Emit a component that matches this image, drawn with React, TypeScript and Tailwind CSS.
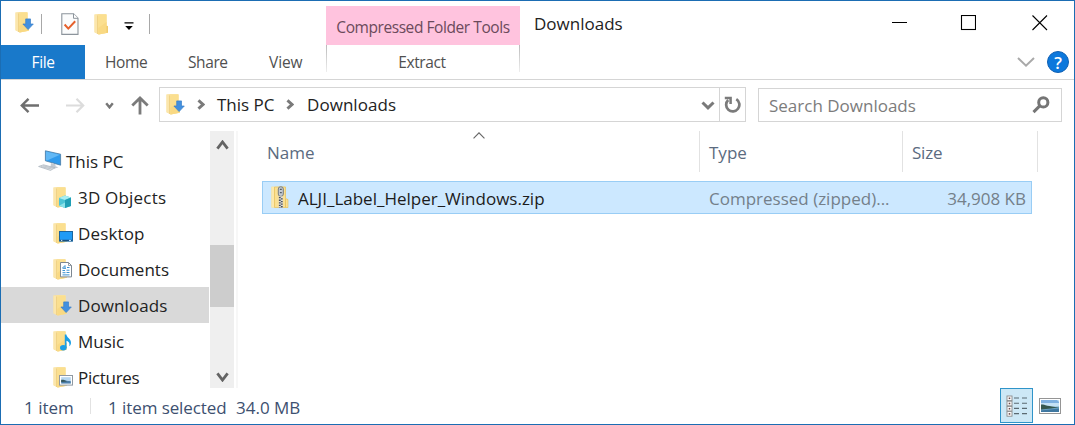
import React from 'react';

type Badge = 'none' | 'cube' | 'desktop' | 'doc' | 'down' | 'music' | 'picture';

function Folder({ badge = 'none', className = '' }: { badge?: Badge; className?: string }) {
  return (
    <svg width="21" height="23" viewBox="0 0 21 23" className={'shrink-0 ' + className}>
      <path d="M.5 1.4L4.5 1H12.6V12.6L14 13.2V19.6L5 21.6L.5 19.2Z" fill="#fae19a" />
      <path d="M.5 1.6L4 2.6V21L.5 19.2Z" fill="#fbe6ac" />
      <path d="M3.6 2.4V21" stroke="#efd083" strokeWidth="1" />
      <path d="M4.3 3.4L6 2H12.6V12.6L14 13.2V19.8L4.3 21.6Z" fill="#fbdf8f" />
      <path d="M4.3 15L12.6 9V19.9L4.3 21.6Z" fill="#f8d67d" opacity=".7" />
      {badge === 'none' && <path d="M12.4 13H14V19.6L12.4 20Z" fill="#f0cb6e" />}
      {badge === 'down' && <path d="M10.7 7.9H15.5V13H18.3L13.1 18.6L7.9 13H10.7Z" fill="#4390df" stroke="#3a80c8" strokeWidth=".7" />}
      {badge === 'cube' && (
        <g>
          <path d="M6 12L12 9.5L18 11.5V20L12 22L6 19.8Z" fill="#4cc5d6" />
          <path d="M6 12L12 9.5L18 11.5L12 14Z" fill="#a8edf2" />
          <path d="M12 14L18 11.5V20L12 22Z" fill="#1f9fb5" />
          <path d="M6 19.8L12 16.5V22Z" fill="#8be2e9" />
        </g>
      )}
      {badge === 'desktop' && (
        <g>
          <rect x="6.5" y="9.5" width="13" height="9.6" fill="#1f9bf5" stroke="#1a659f" />
          <path d="M7 18.4H19" stroke="#174f80" strokeWidth="1.3" />
          <path d="M8 18.4H9.3M16 18.4H18" stroke="#d8efff" strokeWidth="1" />
        </g>
      )}
      {badge === 'doc' && (
        <g>
          <path d="M7.5 4.5H15.5L18.5 7.5V18.9H7.5Z" fill="#fff" stroke="#7d8791" />
          <path d="M15.5 4.5V7.5H18.5" fill="none" stroke="#7d8791" strokeWidth=".8" />
          <path d="M9.5 10L12 7.5V10.5M9.5 10.3H13M14 9.5H16.5M9.5 12.5H12M13.5 12.2H16.5M9.5 14.7H12.5M13.5 14.5H16.5M9.5 16.9H16.5" fill="none" stroke="#3c92d2" strokeWidth="1" />
        </g>
      )}
      {badge === 'music' && (
        <g fill="#1a9fe6">
          <ellipse cx="10.3" cy="17.8" rx="3.3" ry="2.7" />
          <path d="M11.8 4.5H13.4C13.5 7.7 18.2 8.8 18 13C17.9 14.5 17.2 15.6 16.2 16.3C17.1 13.3 15.6 11.3 13.5 10.8V18H11.8Z" />
        </g>
      )}
      {badge === 'picture' && (
        <g>
          <rect x="6.5" y="9.5" width="13" height="9.6" fill="#fff" stroke="#9099a2" />
          <rect x="8.2" y="11.2" width="9.6" height="6.2" fill="#b5d6f0" />
          <path d="M8.2 14.4C11 13.4 12 15 17.8 15.3V17.4H8.2Z" fill="#4d7ea8" />
          <path d="M8.2 13.8H10.5L14 15.5L8.2 16Z" fill="#35575a" />
        </g>
      )}
    </svg>
  );
}

function Monitor() {
  return (
    <svg width="24" height="22" viewBox="0 0 24 22" className="shrink-0">
      <path d="M7.4 .8L22.6 4.2V15.2L7.4 10.8Z" fill="#2f9aec" stroke="#4a7ba3" strokeWidth=".8" />
      <path d="M8 1.5L22 4.8L9 10.6L8 10.3Z" fill="#62b8f5" />
      <path d="M13 13L17.5 14.2V16.2L20.5 17.2L17 18.5L12.5 17Z" fill="#c3cad2" />
      <path d="M.6 16.5L5.5 14.8L17 17.8L12.5 20.4Z" fill="#e3e7eb" stroke="#a5afb9" strokeWidth=".7" />
      <path d="M3 16.6L13.5 19M5 15.8L15.2 18.2" stroke="#adb6bf" strokeWidth=".7" />
    </svg>
  );
}

function Chevron({ w, h, color, sw, dir }: { w: number; h: number; color: string; sw: number; dir: 'up' | 'down' | 'right' }) {
  const p = sw / 2;
  const d =
    dir === 'down'
      ? `M${p} ${p}L${w / 2} ${h - p * 1.4}L${w - p} ${p}`
      : dir === 'up'
        ? `M${p} ${h - p}L${w / 2} ${p * 1.4}L${w - p} ${h - p}`
        : `M${p} ${p}L${w - p * 1.4} ${h / 2}L${p} ${h - p}`;
  return (
    <svg width={w} height={h} viewBox={`0 0 ${w} ${h}`} className="block shrink-0">
      <path d={d} fill="none" stroke={color} strokeWidth={sw} />
    </svg>
  );
}

function TitleBar() {
  return (
    <div className="flex h-[44px]">
      <div className="flex w-[325px] pl-[14px]">
        <Folder badge="down" className="mt-[10px]" />
        <div className="ml-[5px] mt-[13px] h-[20px] w-px bg-[#a8a8a8]" />
        <svg width="18" height="23" viewBox="0 0 18 23" className="ml-[19px] mt-[12px]">
          <path d="M.8 .8H12.5L17 5.3V21.4H.8Z" fill="#fbfcfd" stroke="#8c949c" strokeWidth="1.1" />
          <path d="M12.5 .8V5.3H17" fill="#fff" stroke="#8c949c" />
          <path d="M3.6 11.5L7.3 15.6L14.2 8.2" fill="none" stroke="#e5602c" strokeWidth="2" />
        </svg>
        <Folder className="ml-[15px] mt-[12px]" />
        <svg width="10" height="9" viewBox="0 0 10 9" className="ml-[9px] mt-[21px]">
          <path d="M.5 .3H9.5V1.6H.5ZM1.2 4H8.8L5 8Z" fill="#000" />
        </svg>
        <div className="ml-[15px] mt-[13px] h-[20px] w-px bg-[#a8a8a8]" />
      </div>
      <div className="mt-[5px] flex h-[39px] w-[194px] items-center justify-center bg-[#ffc3de] pt-[4px] text-[15.5px] tracking-[-0.43px] text-[#6b4a5b]">
        Compressed Folder Tools
      </div>
      <div className="pl-[14px] pt-[10px] text-[17px] leading-[26px] text-[#222]">Downloads</div>
      <div className="ml-auto mt-[14px] flex pr-[26px]">
        <svg width="15" height="16" viewBox="0 0 15 16"><path d="M0 7.5H15" stroke="#000" /></svg>
        <svg width="16" height="16" viewBox="0 0 16 16" className="ml-[53px]">
          <rect x="1.5" y=".5" width="14" height="14" fill="none" stroke="#000" strokeWidth="1.1" />
        </svg>
        <svg width="16" height="16" viewBox="0 0 16 16" className="ml-[56px]">
          <path d="M.5 .5L15 15M15 .5L.5 15" stroke="#000" strokeWidth="1.1" />
        </svg>
      </div>
    </div>
  );
}

function Tabs() {
  return (
    <div className="flex h-[35px] border-b border-[#d5d5d5] text-[15.5px] leading-[35px] tracking-[-0.4px] text-[#505050]">
      <div className="h-[34px] w-[84px] bg-[#1979ca] text-center text-white">File</div>
      <div className="w-[83px] pl-[20px]">Home</div>
      <div className="w-[81px] pl-[20px]">Share</div>
      <div className="w-[77px] pl-[20px] tracking-[-0.1px]">View</div>
      <div className="flex w-[194px] justify-between">
        <div className="h-[27px] w-px bg-gradient-to-b from-[#bbb] to-[#eee]" />
        <div className="pr-[2px]">Extract</div>
        <div className="h-[27px] w-px bg-gradient-to-b from-[#bbb] to-[#eee]" />
      </div>
      <div className="ml-auto flex items-center pr-[5px]">
        <Chevron w={18} h={10} color="#a9a9a9" sw={2} dir="down" />
        <div className="ml-[12px] flex h-[22px] w-[22px] items-center justify-center rounded-full border border-[#1161b4] bg-[#0c78dc] text-[17px] font-semibold tracking-normal text-white">?</div>
      </div>
    </div>
  );
}

function AddressRow() {
  return (
    <div className="flex h-[43px] items-start text-[17px]">
      <svg width="19" height="16" viewBox="0 0 19 16" className="ml-[19px] mt-[18px]">
        <path d="M19 7.5H2M8.5 .8L1.8 7.5L8.5 14.2" fill="none" stroke="#6f6f6f" strokeWidth="2.4" />
      </svg>
      <svg width="19" height="16" viewBox="0 0 19 16" className="ml-[27px] mt-[18px]">
        <path d="M0 7.5H17M10.5 .8L17.2 7.5L10.5 14.2" fill="none" stroke="#dcdcdc" strokeWidth="2.2" />
      </svg>
      <div className="ml-[20px] mt-[22px]"><Chevron w={9} h={7} color="#777" sw={2.4} dir="down" /></div>
      <svg width="18" height="19" viewBox="0 0 18 19" className="ml-[17px] mt-[16px]">
        <path d="M9 18.5V2M1.3 9.5L9 2L16.7 9.5" fill="none" stroke="#7b7b7b" strokeWidth="2.8" />
      </svg>
      <div className="ml-[10px] mt-[7px] flex h-[35px] w-[587px] items-center border border-[#d5d5d5] text-[#222]">
        <Folder badge="down" className="ml-[6px]" />
        <div className="ml-[10px]"><Chevron w={8} h={11} color="#7a7a7a" sw={2.9} dir="right" /></div>
        <div className="ml-[12px] w-[58px] whitespace-nowrap">This PC</div>
        <div className="ml-[11px]"><Chevron w={8} h={11} color="#7a7a7a" sw={2.9} dir="right" /></div>
        <div className="ml-[13px] tracking-[0.05px]">Downloads</div>
        <div className="ml-auto pt-[1px]"><Chevron w={14} h={9} color="#7a7a7a" sw={3} dir="down" /></div>
        <div className="ml-[4px] flex h-full w-[26px] items-center justify-center border-l border-[#d5d5d5]">
          <svg width="17" height="18" viewBox="0 0 17 18">
            <path d="M12.3 3.2A6.6 6.6 0 1 1 4.2 4" fill="none" stroke="#7b7b7b" strokeWidth="2.7" />
            <path d="M.8 1.9H6.6V8" fill="none" stroke="#7b7b7b" strokeWidth="2.5" />
          </svg>
        </div>
      </div>
      <div className="ml-[12px] mt-[8px] flex h-[34px] w-[304px] items-center border border-[#d5d5d5] pl-[10px] pr-[11px] text-[#7c7c7c]">
        <div className="pt-[2px]">Search Downloads</div>
        <svg width="18" height="18" viewBox="0 0 18 18" className="ml-auto">
          <circle cx="11.3" cy="6.4" r="4.6" fill="none" stroke="#757575" strokeWidth="3" />
          <path d="M8 9.6L1.5 16.1" stroke="#757575" strokeWidth="3" />
        </svg>
      </div>
    </div>
  );
}

const places: { name: string; badge: Badge }[] = [
  { name: '3D Objects', badge: 'cube' },
  { name: 'Desktop', badge: 'desktop' },
  { name: 'Documents', badge: 'doc' },
  { name: 'Downloads', badge: 'down' },
  { name: 'Music', badge: 'music' },
  { name: 'Pictures', badge: 'picture' },
];

const tracking: Record<string, string> = {
  '3D Objects': 'tracking-[0.2px]',
  Desktop: 'tracking-[0.15px]',
  Documents: 'tracking-[0px]',
  Downloads: 'tracking-[0.1px]',
  Music: 'tracking-[0px]',
  Pictures: 'tracking-[-0.3px]',
};

function Sidebar() {
  return (
    <div className="mt-[8px] flex h-[257px] w-[237px] shrink-0">
      <div className="w-[208px] overflow-hidden pt-[12px] text-[17px] text-[#222]">
        <div className="flex h-[36px] items-center pl-[37px]">
          <Monitor />
          <div className="ml-[4px] pt-[2px]">This PC</div>
        </div>
        {places.map((p) => (
          <div key={p.name} className={'flex h-[36px] items-center pl-[52px] ' + (p.badge === 'down' ? 'bg-[#d9d9d9]' : '')}>
            <Folder badge={p.badge} />
            <div className={'ml-[4px] pt-[2px] ' + tracking[p.name]}>{p.name}</div>
          </div>
        ))}
      </div>
      <div className="ml-[1px] flex w-[24px] flex-col items-center bg-[#efefef] pb-[6px] pt-[9px]">
        <Chevron w={13} h={10} color="#646464" sw={2.8} dir="up" />
        <div className="mt-[95px] h-[62px] w-[24px] bg-[#cdcdcd]" />
        <div className="mt-auto"><Chevron w={13} h={10} color="#646464" sw={2.8} dir="down" /></div>
      </div>
      <div className="ml-[2px] w-[2px] bg-[#f7f7f7]" />
    </div>
  );
}

function ZipIcon() {
  return (
    <svg width="19" height="23" viewBox="0 0 19 23">
      <path d="M.5 .8H14.5V12.5L17 13.5V21.5H.5Z" fill="#f5d67a" />
      <path d="M.5 .8H3V21.5H.5Z" fill="#fbe8ad" />
      <path d="M3.5 1H14.5V12.5L17 13.5V21.5H3.5Z" fill="#fae093" stroke="#e4bd58" strokeWidth=".6" />
      <path d="M14.5 13L14.5 21.5" stroke="#e9c563" />
      <rect x="7.3" y=".8" width="5" height="9.5" rx="2.2" fill="#c5cbd2" stroke="#68707a" strokeWidth=".9" />
      <path d="M8.9 3.4H10.8M8.9 6.6H10.8" stroke="#555d66" strokeWidth="1.2" />
      <path d="M9.8 10.5V22" stroke="#ddd" strokeWidth="4" />
      <path d="M8.8 11V22" stroke="#4a5056" strokeWidth="1.8" strokeDasharray="1.3 1.3" />
      <path d="M10.8 12.3V22" stroke="#4a5056" strokeWidth="1.8" strokeDasharray="1.3 1.3" />
    </svg>
  );
}

function FileList() {
  return (
    <div className="flex-1 pt-[8px] text-[17px]">
      <div className="flex h-[41px] text-[#5b6b80]">
        <div className="flex w-[462px] border-r border-[#e2e2e2] pl-[29px] leading-[44px]">
          <div className="w-[206px]">Name</div>
          <div className="mt-[1px]"><Chevron w={12} h={7} color="#666" sw={1.1} dir="up" /></div>
        </div>
        <div className="w-[203px] border-r border-[#e2e2e2] pl-[9px] leading-[44px]">Type</div>
        <div className="w-[135px] border-r border-[#e2e2e2] pl-[9px] leading-[44px] tracking-[-0.2px]">Size</div>
      </div>
      <div className="ml-[24px] mt-[9px] flex h-[33px] w-[770px] items-center border border-[#99cdf5] bg-[#cce8ff] text-[#74808a]">
        <div className="ml-[8px]"><ZipIcon /></div>
        <div className="ml-[8px] w-[411px] pt-[2px] text-[#1c1c1c]">ALJI_Label_Helper_Windows.zip</div>
        <div className="whitespace-nowrap pt-[2px]">Compressed (zipped)...</div>
        <div className="ml-auto pr-[5px] pt-[2px]">34,908 KB</div>
      </div>
    </div>
  );
}

function StatusBar() {
  return (
    <div className="flex h-[36px] items-center text-[17px] text-[#3d5070]">
      <div className="w-[89px] pl-[23px] pt-[3px]">1 item</div>
      <div className="h-[16px] w-px bg-[#e2e2e2]" />
      <div className="ml-[17px] w-[128px] whitespace-nowrap pt-[3px] tracking-[-0.08px]">1 item selected</div>
      <div className="whitespace-nowrap pt-[3px]">34.0 MB</div>
      <div className="ml-auto flex h-[35px] w-[33px] items-center justify-center self-start border border-[#2f94c9] bg-[#cde8f6]">
        <svg width="22" height="23" viewBox="0 0 22 23" className="mt-[2px]">
          {[1, 6.2, 11.4, 16.6].map((y) => (
            <g key={y}>
              <rect x="1" y={y} width="5" height="4.6" fill="#fff" stroke="#8b8b8b" strokeWidth=".9" />
              <rect x="2.7" y={y + 1.5} width="1.6" height="1.6" fill="#6d4a4a" />
              <path d={`M8 ${y + 2}H13M16 ${y + 2}H21`} stroke="#5b6a72" strokeWidth="1.1" />
            </g>
          ))}
        </svg>
      </div>
      <svg width="22" height="16" viewBox="0 0 22 16" className="ml-[6px] mr-[13px]">
        <rect x=".5" y=".5" width="21" height="15" fill="#fff" stroke="#959595" />
        <rect x="2" y="2" width="18" height="12" fill="#c4e1f5" />
        <path d="M2 2H18L20 4V5H2Z" fill="#7eb0e0" />
        <path d="M2 9.5L20 8.5V14H2Z" fill="#6ba3c4" />
        <path d="M2 6.5C5 6 8 8.5 20 9.2L12 10.5L2 11.5Z" fill="#35574e" />
        <path d="M2 12.5L20 10.5V14H2Z" fill="#3f77a0" />
      </svg>
    </div>
  );
}

export default function App() {
  return (
    <div className="flex h-[425px] w-[1075px] flex-col overflow-hidden border border-[#1b6db3] bg-white font-['Open_Sans','Noto_Sans',sans-serif]">
      <TitleBar />
      <Tabs />
      <AddressRow />
      <div className="flex h-[265px]">
        <Sidebar />
        <FileList />
      </div>
      <StatusBar />
    </div>
  );
}
